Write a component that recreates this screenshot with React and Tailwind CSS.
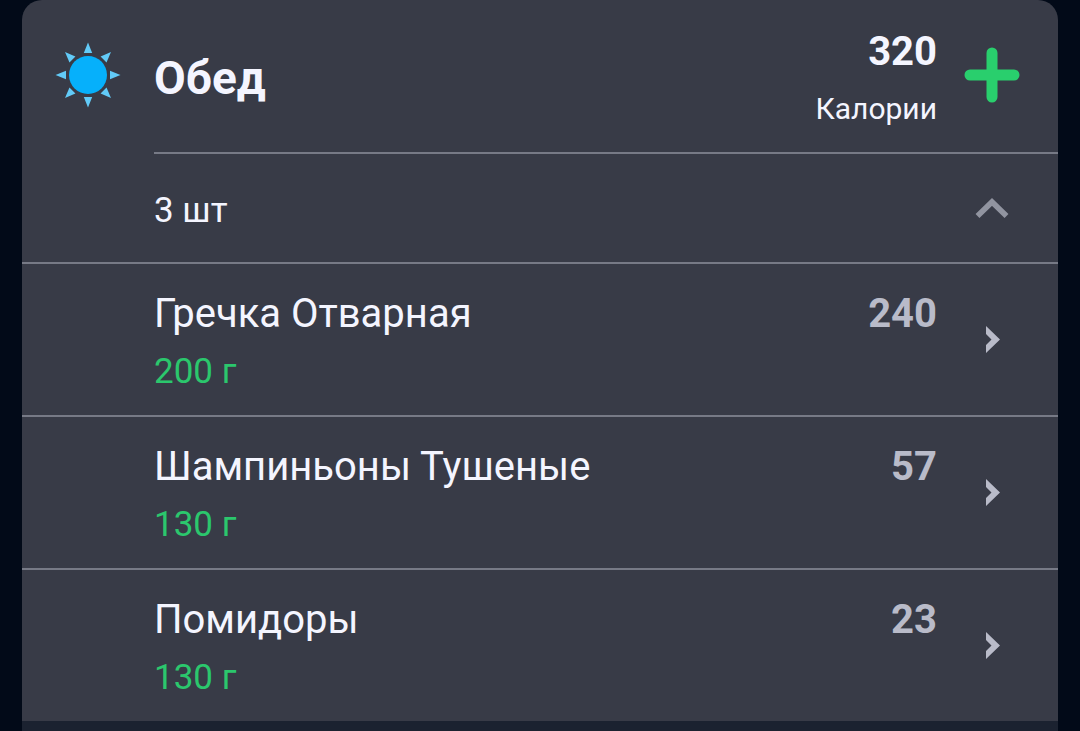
import React, { useState } from 'react';

const MEAL = {
  title: 'Обед',
  items: [
    { id: 1, name: 'Гречка Отварная', weight: 200, calories: 240 },
    { id: 2, name: 'Шампиньоны Тушеные', weight: 130, calories: 57 },
    { id: 3, name: 'Помидоры', weight: 130, calories: 23 },
  ],
};

const App = () => {
  const [expanded, setExpanded] = useState(true);
  const total = MEAL.items.reduce((sum, item) => sum + item.calories, 0);

  return (
    <main className="min-h-screen flex flex-col bg-[#020a18] px-[22px] font-['Roboto',sans-serif] text-[#f4f5ff]">
      <section className="rounded-t-[20px] bg-[#383b47]">

        {/* Header */}
        <header className="flex">
          <div className="w-[132px] shrink-0 flex items-center justify-center pb-1">
            <SunIcon />
          </div>
          <div className="flex-1 flex items-center gap-[27px] pr-[38px] border-b-2 border-[#777a86]">
            <h2 className="flex-1 pt-1 text-[46px] leading-[58px] font-bold">{MEAL.title}</h2>
            <div className="pt-[23px] pb-[15px] text-right">
              <p className="text-[40px] leading-[58px] font-bold">{total}</p>
              <p className="text-[30px] leading-14">Калории</p>
            </div>
            <button type="button" aria-label="Добавить" className="w-14 pb-0.5 flex justify-center cursor-pointer">
              <PlusIcon />
            </button>
          </div>
        </header>

        {/* Item count, toggles the list */}
        <button
          type="button"
          aria-expanded={expanded}
          onClick={() => setExpanded(!expanded)}
          className="w-full flex items-center justify-between py-[22px] pl-[132px] pr-[38px] text-left border-b-2 border-[#777a86] cursor-pointer"
        >
          <span className="pt-1.5 text-[35px] leading-[58px]">{MEAL.items.length} шт</span>
          <span className="w-14 flex justify-center">
            <ChevronUpIcon flipped={!expanded} />
          </span>
        </button>

        {/* Food list */}
        {expanded && (
          <ul className="divide-y-2 divide-[#777a86]">
            {MEAL.items.map((item) => (
              <FoodRow key={item.id} item={item} />
            ))}
          </ul>
        )}
      </section>
      <div className="flex-1 bg-[#1b2230]" />
    </main>
  );
};

// ─── Sub-components ─────────────────────────────────────────────────────────

const FoodRow = ({ item }) => (
  <li>
    <button type="button" className="w-full flex items-center gap-[27px] pl-[132px] pr-[38px] text-left cursor-pointer">
      <span className="flex-1 grid grid-cols-[1fr_auto] pt-[21px] pb-[14px]">
        <span className="text-[40px] leading-[58px]">{item.name}</span>
        <span className="text-[40px] leading-[58px] font-bold text-[#b9bbc9]">{item.calories}</span>
        <span className="text-[35px] leading-[58px] text-[#2bc76d]">{item.weight} г</span>
      </span>
      <span className="w-14 flex justify-center">
        <ChevronRightIcon />
      </span>
    </button>
  </li>
);

const RAYS = [0, 45, 90, 135, 180, 225, 270, 315];

const SunIcon = () => (
  <svg width="66" height="66" viewBox="0 0 66 66" aria-hidden="true">
    <circle cx="33" cy="33" r="19" fill="#06b0fb" />
    {RAYS.map((angle) => (
      <path key={angle} d="M33 0.5 L37.2 11 H28.8 Z" fill="#62cbf8" transform={`rotate(${angle} 33 33)`} />
    ))}
  </svg>
);

const PlusIcon = () => (
  <svg width="56" height="56" viewBox="0 0 56 56" aria-hidden="true">
    <path d="M28 6 V50 M6 28 H50" stroke="#29cf6d" strokeWidth="11" strokeLinecap="round" fill="none" />
  </svg>
);

const ChevronUpIcon = ({ flipped }) => (
  <svg width="34" height="20" viewBox="0 0 34 20" className={flipped ? 'rotate-180' : ''} aria-hidden="true">
    <path d="M2.5 18 L17 4 L31.5 18" stroke="#9194a0" strokeWidth="5.6" fill="none" />
  </svg>
);

const ChevronRightIcon = () => (
  <svg width="16" height="28" viewBox="0 0 16 28" aria-hidden="true">
    <path d="M2 0 L16 13.5 L2 27 V19 L7.5 13.5 L2 8 Z" fill="#b9bbc9" />
  </svg>
);

export default App;
